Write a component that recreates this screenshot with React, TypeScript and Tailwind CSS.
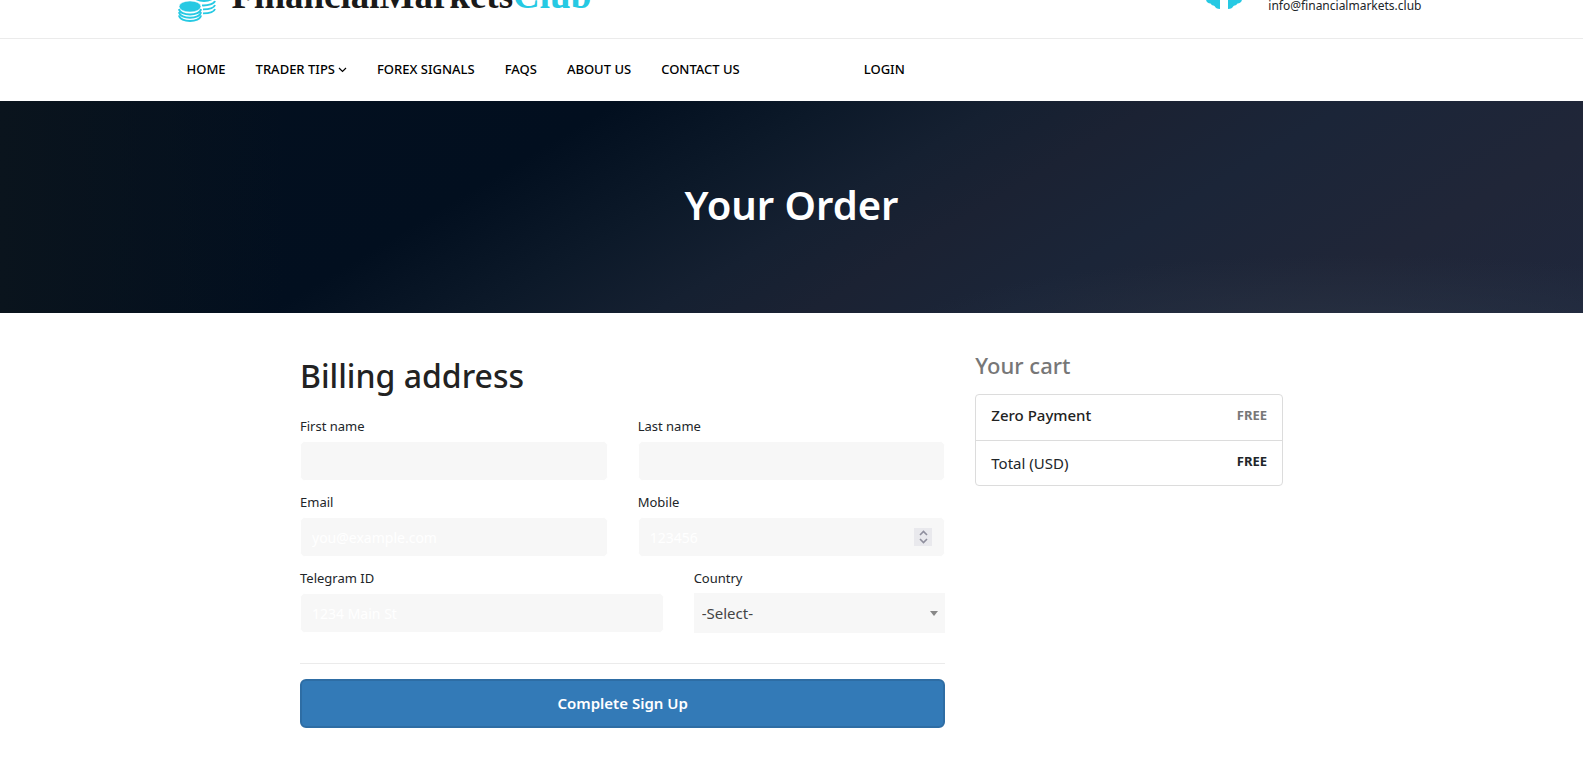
const navLinks = ["HOME", "TRADER TIPS", "FOREX SIGNALS", "FAQS", "ABOUT US", "CONTACT US"];

const inputClass =
  "block h-10 w-full rounded-[5px] border border-white bg-[#f7f7f7] px-[11px] text-sm text-[#333] placeholder:text-white outline-none";
const labelClass = "mb-1 block text-[13px] leading-[22px]";

const CoinsIcon = () => (
  <svg width="38" height="44" viewBox="0 0 38 44" fill="none" aria-hidden="true">
    <ellipse cx="26" cy="18" rx="11" ry="6" fill="#26c9e3" />
    <g stroke="#26c9e3" strokeWidth="1.9">
      <path d="M24 27.4c6 .3 12-1.4 13-4.4" />
      <path d="M25 31.4c6 0 11-1.4 12-4.4" />
      <path d="M25 35.4c6 0 11-1.4 12-4.4" />
      <path d="M1 31c1 7.4 21 7.4 22 0" />
      <path d="M1 34.2c1 7.4 21 7.4 22 0" />
      <path d="M1 37.4c1 7.4 21 7.4 22 0" />
    </g>
    <ellipse cx="12" cy="28.5" rx="11" ry="5.6" fill="#26c9e3" stroke="#fff" strokeWidth=".6" />
  </svg>
);

const SupportIcon = () => (
  <svg width="36" height="36" viewBox="0 0 36 36" fill="#26c9e3" aria-hidden="true">
    <path d="M14 0v36c-3 0-4.500-1-5.500-3-1.500-.5-3-1-4-2.500C2 30.500 0 29 0 26V8C4 2 8 0 14 0z" />
    <path d="M22 0v36c3 0 4.500-1 5.500-3 1.500-.5 3-1 4-2.500 2.500 0 4.500-1.500 4.500-4.500V8c-4-6-8-8-14-8z" />
  </svg>
);

const Chevron = ({ className = "" }: { className?: string }) => (
  <svg
    width="9"
    height="6"
    viewBox="0 0 9 6"
    fill="none"
    stroke="currentColor"
    className={className}
    aria-hidden="true"
  >
    <path d="M1 1l3.500 3.500L8 1" />
  </svg>
);

const Header = () => {
  return (
    <header>
      <div className="h-[39px] border-b border-[#ebebeb]">
        <div className="mx-auto flex h-full max-w-[1290px] items-end justify-between overflow-hidden px-[15px]">
          <a href="#" className="flex items-end gap-4 pb-4 pl-4">
            <CoinsIcon />
            <span className="pb-2 font-['Liberation_Serif',serif] text-[37px] leading-9 font-bold text-[#1a1a1a]">
              FinancialMarkets<span className="text-[#26c9e3]">Club</span>
            </span>
          </a>
          <div className="flex items-end gap-[26px] pb-6">
            <div className="pb-[5px]">
              <SupportIcon />
            </div>
            <a href="mailto:info@financialmarkets.club" className="text-xs leading-4">
              info@financialmarkets.club
            </a>
          </div>
        </div>
      </div>
      <nav className="mx-auto flex h-[62px] max-w-[1290px] items-center px-10 pb-px text-[13px] font-medium text-black">
        <ul className="flex gap-[30px]">
          {navLinks.map((link) => (
            <li key={link}>
              <a href="#" className="flex items-center gap-[3px]">
                {link}
                {link === "TRADER TIPS" && <Chevron className="stroke-[1.2]" />}
              </a>
            </li>
          ))}
        </ul>
        <a href="#" className="ml-[124px]">
          LOGIN
        </a>
      </nav>
    </header>
  );
};

const Hero = () => {
  return (
    <section className="flex h-[212px] items-center justify-center bg-[radial-gradient(ellipse_at_86%_110%,#2a3546b0_0%,transparent_24%),linear-gradient(90deg,#0a141d_0%,transparent_18%),linear-gradient(149deg,#04101f_0%,#020f1f_32%,#0c1929_43%,#152031_52%,#1b2233_60%,#1b2538_70%,#202638_85%,#1f273c_100%)] pb-1">
      <h1 className="text-[40px] leading-none font-semibold text-white">Your Order</h1>
    </section>
  );
};

const BillingForm = () => {
  return (
    <form className="w-2/3 px-[15px] pt-[42px]">
      <h2 className="mb-[18px] text-[32px] leading-[42px] font-medium text-[#222]">Billing address</h2>
      <div className="mb-2.5 grid grid-cols-2 gap-x-[30px] gap-y-2.5">
        <div>
          <label htmlFor="firstName" className={labelClass}>First name</label>
          <input id="firstName" type="text" className={inputClass} />
        </div>
        <div>
          <label htmlFor="lastName" className={labelClass}>Last name</label>
          <input id="lastName" type="text" className={inputClass} />
        </div>
        <div>
          <label htmlFor="email" className={labelClass}>Email</label>
          <input id="email" type="email" placeholder="you@example.com" className={inputClass} />
        </div>
        <div>
          <label htmlFor="mobile" className={labelClass}>Mobile</label>
          <div className="relative">
            <input id="mobile" type="text" inputMode="numeric" placeholder="123456" className={inputClass} />
            <span className="absolute top-[11px] right-[13px] flex h-[18px] w-[18px] flex-col items-center justify-center gap-0.5 bg-[#e9e9ed] text-[#8f8f9d]">
              <Chevron className="rotate-180 stroke-[1.6]" />
              <Chevron className="stroke-[1.6]" />
            </span>
          </div>
        </div>
      </div>
      <div className="flex gap-[30px]">
        <div className="grow">
          <label htmlFor="telegram" className={labelClass}>Telegram ID</label>
          <input id="telegram" type="text" placeholder="1234 Main St" className={inputClass} />
        </div>
        <div className="w-[39%]">
          <label htmlFor="country" className={labelClass}>Country</label>
          <div className="relative">
            <select id="country" className="block h-10 w-full appearance-none bg-[#f7f7f7] px-2 text-[15px] text-[#444]">
              <option>-Select-</option>
            </select>
            <span className="pointer-events-none absolute top-[18px] right-[7px] border-x-4 border-t-[5px] border-x-transparent border-t-[#888]" />
          </div>
        </div>
      </div>
      <hr className="mt-[30px] mb-[15px] border-[#ebebeb]" />
      <button
        type="submit"
        className="h-[49px] w-full rounded-md border-2 border-[#2e6da4] bg-[#337ab7] text-[15px] font-semibold text-white"
      >
        Complete Sign Up
      </button>
    </form>
  );
};

const Cart = () => {
  return (
    <aside className="w-1/3 px-[15px] pt-[37px]">
      <h4 className="mb-[13px] text-[22px] leading-[31px] font-medium text-[#777]">Your cart</h4>
      <ul className="divide-y divide-[#dcdcdc] rounded-[4px] border border-[#dcdcdc]">
        <li className="flex h-[46px] justify-between px-[15px] pt-2">
          <h6 className="text-[15px] leading-6 font-medium text-[#222]">Zero Payment</h6>
          <span className="text-[13px] leading-6 font-bold text-[#777]">FREE</span>
        </li>
        <li className="flex h-11 justify-between px-[15px] pt-2">
          <span className="text-[15px] leading-7">Total (USD)</span>
          <strong className="text-[13px] leading-6">FREE</strong>
        </li>
      </ul>
    </aside>
  );
};

export default function App() {
  return (
    <div className="bg-white font-['Noto_Sans',sans-serif] text-[#212529]">
      <Header />
      <Hero />
      <main className="mx-auto flex max-w-[1013px] pb-10">
        <BillingForm />
        <Cart />
      </main>
    </div>
  );
}
